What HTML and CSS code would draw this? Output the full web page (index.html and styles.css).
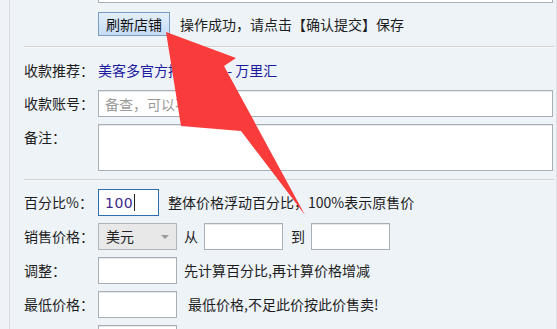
FILE: index.html
```html
<!DOCTYPE html>
<html lang="zh-CN">
<head>
	<meta charset="UTF-8">
	<title>店铺设置</title>
	<link rel="stylesheet" href="styles.css">
</head>
<body>
	<div class="panel">
		<div class="row row-cut">
			<span class="label"></span>
			<input type="text" class="field wide">
		</div>
		<div class="row row-btn">
			<span class="label"></span>
			<button type="button" class="btn">刷新店铺</button>
			<span class="msg">操作成功，请点击【确认提交】保存</span>
		</div>
		<div class="line"></div>
		<div class="row">
			<span class="label">收款推荐：</span>
			<a class="link">美客多官方推荐收款 - 万里汇</a>
		</div>
		<div class="row row-acc">
			<span class="label">收款账号：</span>
			<input type="text" class="field wide" placeholder="备查，可以不填">
		</div>
		<div class="row row-area">
			<span class="label">备注：</span>
			<textarea class="field wide area"></textarea>
		</div>
		<div class="line line-2"></div>
		<div class="row row-pct">
			<span class="label">百分比%：</span>
			<div class="field focus"><span class="val">100</span><span class="caret"></span></div>
			<span class="tip tip-pct">整体价格浮动百分比，100%表示原售价</span>
		</div>
		<div class="row">
			<span class="label">销售价格：</span>
			<div class="field select">美元<span class="drop"></span></div>
			<span class="tip">从</span>
			<input type="text" class="field num">
			<span class="tip tip-to">到</span>
			<input type="text" class="field num">
		</div>
		<div class="row">
			<span class="label">调整：</span>
			<input type="text" class="field num">
			<span class="tip">先计算百分比,再计算价格增减</span>
		</div>
		<div class="row">
			<span class="label">最低价格：</span>
			<input type="text" class="field num">
			<span class="tip tip-min">最低价格,不足此价按此价售卖!</span>
		</div>
		<div class="row">
			<span class="label"></span>
			<input type="text" class="field num">
		</div>
	</div>

	<!-- 红色指示箭头 -->
	<svg class="arrow" width="557" height="329" viewBox="0 0 557 329">
		<polygon points="166,32 236,58 224,66 305,215 241,131 181,126" fill="#fa3b3b"/>
	</svg>
</body>
</html>
```

FILE: styles.css
```css
html, body {
	margin: 0;
	padding: 0;
}

body {
	width: 557px;
	height: 329px;
	overflow: hidden;
	position: relative;
	background: #eff3f7;
	font-size: 14px;
	font-family: "Noto Sans CJK SC", "Microsoft YaHei", sans-serif;
	color: #1d1d1d;
}

.panel {
	display: flow-root;
	margin-left: 9px;
	width: 530px;
	height: 400px;
	padding: 0 2px 0 14px;
	border-left: 1px solid #d9dde2;
	border-right: 1px solid #dde1e6;
	background: #eef3f8;
}

.row {
	display: flex;
	align-items: center;
	height: 27px;
	margin-top: 7px;
	line-height: 27px;
}

.row-cut {
	margin-top: -24px;
}

.row-btn {
	height: 24px;
	margin-top: 9px;
}

.row-acc {
	margin-top: 6px;
}

.row-area {
	height: 47px;
	align-items: flex-start;
}

.row-pct {
	margin-top: 8px;
}

.label {
	flex: none;
	width: 74px;
	white-space: nowrap;
}

.line {
	height: 0;
	margin: 10px 0 9px;
	border-top: 1px solid #d0d2d4;
	border-bottom: 1px solid #f6f8fa;
}

.line-2 {
	margin: 8px 0 0;
}

.btn {
	width: 72px;
	height: 24px;
	padding: 0;
	border: 1px solid #7d9cc2;
	background: linear-gradient(#e3effb, #c5dcf4);
	font: 14px "Noto Sans CJK SC", sans-serif;
	line-height: 22px;
	color: #111;
}

.msg {
	margin-left: 10px;
	white-space: nowrap;
}

.link {
	color: #1b1b9e;
	white-space: nowrap;
}

.field {
	box-sizing: border-box;
	height: 27px;
	margin: 0;
	padding: 0 6px;
	border: 1px solid #a9afb6;
	box-shadow: inset 0 1px 0 #e7e8ea;
	background: #fff;
	font: 14px "Noto Sans CJK SC", sans-serif;
	color: #222;
	outline: none;
}

.field::placeholder {
	color: #9a9a9a;
}

.wide {
	flex: none;
	width: 455px;
}

.area {
	height: 47px;
	resize: none;
}

.num {
	flex: none;
	width: 79px;
}

.focus {
	display: flex;
	align-items: center;
	width: 61px;
	padding-left: 6px;
	border-color: #2e6db0;
	box-shadow: none;
}

.val {
	color: #3a2a8c;
	font-family: "DejaVu Sans", sans-serif;
	font-size: 14px;
	letter-spacing: 0.5px;
}

.caret {
	width: 1px;
	height: 17px;
	margin-left: 1px;
	background: #222;
}

.select {
	display: flex;
	align-items: center;
	justify-content: space-between;
	width: 79px;
	padding: 0 7px;
	border-color: #b1b5ba;
	background: #e8e8e8;
	box-shadow: none;
	line-height: 25px;
}

.drop {
	width: 0;
	height: 0;
	border-left: 4px solid transparent;
	border-right: 4px solid transparent;
	border-top: 4px solid #9a9a9a;
}

.tip {
	margin: 0 6px 0 7px;
	white-space: nowrap;
}

.tip-pct {
	margin-left: 9px;
}

.tip-to {
	margin: 0 6px 0 8px;
}

.tip-min {
	margin-left: 11px;
}

.arrow {
	position: absolute;
	left: 0;
	top: 0;
	pointer-events: none;
}
```
